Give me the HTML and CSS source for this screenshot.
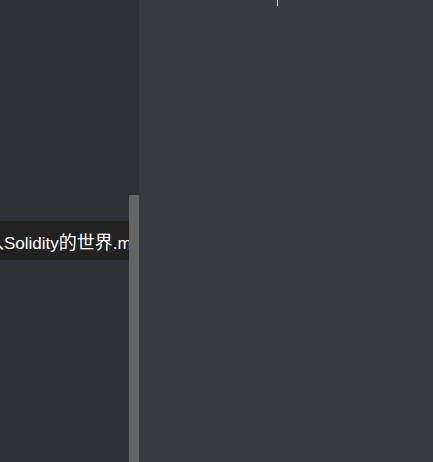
FILE: index.html
```html
<!DOCTYPE html>
<html>
<head>
<meta charset="utf-8">
<link rel="stylesheet" href="styles.css">
</head>
<body>
<div class="app">
  <div class="sidebar">
    <div class="list">
      <div class="spacer"></div>
      <div class="row"><span class="name"><span class="cjk">进入</span>Solidity<span class="cjk">的世界</span>.md</span></div>
    </div>
    <div class="track"><div class="thumb"></div></div>
  </div>
  <div class="main">
    <div class="caret"></div>
  </div>
</div>
</body>
</html>
```
FILE: styles.css
```css
html, body {
  margin: 0;
  padding: 0;
  height: 100%;
  overflow: hidden;
}
.app {
  display: flex;
  height: 462px;
  font-family: "Liberation Sans", "Noto Sans CJK SC", sans-serif;
}
.sidebar {
  width: 139px;
  background: #2f3033;
  display: flex;
  flex-shrink: 0;
}
.list {
  width: 129px;
  overflow: hidden;
}
.spacer {
  height: 221px;
}
.row {
  height: 39px;
  background: #212121;
  display: flex;
  align-items: center;
  overflow: hidden;
  white-space: nowrap;
}
.name {
  color: #ffffff;
  font-size: 17px;
  margin-left: -32px;
}
.cjk {
  font-size: 18px;
}
.track {
  width: 10px;
  padding-top: 195px;
}
.thumb {
  height: 267px;
  background: #646464;
}
.main {
  flex: 1;
  background: #373b3e;
  position: relative;
}
.caret {
  position: absolute;
  left: 138px;
  top: 0;
  width: 1px;
  height: 6px;
  background: #d8d8d8;
}
```
